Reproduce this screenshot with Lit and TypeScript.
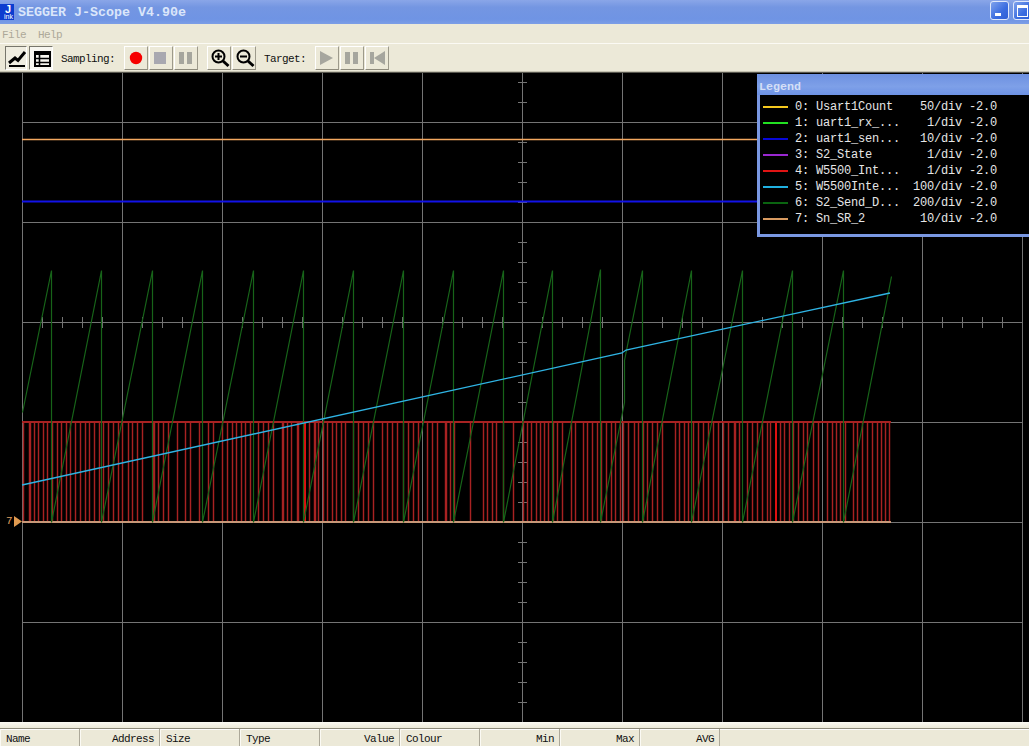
import { LitElement, css, html, svg } from 'lit'
import { customElement } from 'lit/decorators.js'

const LEGEND = [
  { name: 'Usart1Count', value: '50/div -2.0', color: '#f5c81e' },
  { name: 'uart1_rx_...', value: '1/div -2.0', color: '#22e022' },
  { name: 'uart1_sen...', value: '10/div -2.0', color: '#0808d8' },
  { name: 'S2_State', value: '1/div -2.0', color: '#9a28d0' },
  { name: 'W5500_Int...', value: '1/div -2.0', color: '#e01414' },
  { name: 'W5500Inte...', value: '100/div -2.0', color: '#20b0e0' },
  { name: 'S2_Send_D...', value: '200/div -2.0', color: '#0a6410' },
  { name: 'Sn_SR_2', value: '10/div -2.0', color: '#d89a60' },
]

const COLUMNS = [
  { label: 'Name' },
  { label: 'Address', right: true },
  { label: 'Size' },
  { label: 'Type' },
  { label: 'Value', right: true },
  { label: 'Colour' },
  { label: 'Min', right: true },
  { label: 'Max', right: true },
  { label: 'AVG', right: true },
]

// pulse edges of channel 4, read off the trace
const RED_X = [
  23, 29, 30, 34, 38, 43, 47, 52, 57, 61, 66, 70, 75, 80, 85, 89, 94, 99, 103, 108, 113, 118, 122, 128, 132, 137, 142,
  153, 154, 158, 163, 168, 177, 185, 190, 199, 208, 213, 222, 227, 232, 236, 241, 245, 250, 258, 263, 268, 273, 282,
  283, 287, 291, 297, 298, 309, 314, 315, 318, 323, 327, 332, 336, 341, 345, 353, 358, 363, 368, 373, 382, 387, 392,
  397, 403, 408, 413, 418, 427, 432, 437, 445, 446, 450, 454, 470, 483, 487, 492, 496, 503, 513, 523, 527, 531, 536,
  540, 544, 548, 553, 557, 562, 571, 575, 583, 587, 592, 597, 601, 606, 611, 615, 620, 623, 628, 634, 638, 643, 647,
  652, 657, 662, 675, 679, 684, 688, 693, 698, 703, 708, 713, 718, 723, 728, 734, 735, 739, 747, 752, 757, 762, 767,
  770, 780, 784, 789, 793, 798, 803, 807, 813, 818, 827, 832, 836, 840, 845, 853, 857, 862, 867, 872, 877, 881, 885,
  889,
]
const RED_BRIGHT = [304, 305, 775, 776]

const GREEN_PEAKS = [51, 101, 152, 202, 253, 303, 353, 403, 453, 503, 552]
const GREEN_PEAKS_2 = [642, 691, 742, 792, 843]

function range(from: number, to: number, step: number) {
  const out: number[] = []
  for (let v = from; v <= to; v += step) out.push(v)
  return out
}

function greenPoints() {
  const pts: number[][] = [[22, 412]]
  for (const x of GREEN_PEAKS) pts.push([x, 270], [x, 522])
  // channel jumps near x=624
  pts.push([600, 269], [600, 522], [624, 402], [624, 360])
  for (const x of GREEN_PEAKS_2) pts.push([x, 270], [x, 522])
  pts.push([891, 276])
  return pts.map((p) => `${p[0] + 0.5},${p[1] + 0.5}`).join(' ')
}

@customElement('scope-chart')
export class ScopeChart extends LitElement {
  static styles = css`
    :host {
      display: block;
      height: 649px;
      background: #000;
    }
    svg {
      display: block;
    }
    .crisp {
      shape-rendering: crispEdges;
    }
    .grid line {
      stroke: #747474;
    }
    .red line {
      stroke: #a82222;
    }
    .red .bright {
      stroke: #e01010;
    }
    .red-glow line {
      stroke: #a82222;
      stroke-width: 3;
      opacity: 0.22;
    }
    .marker-label {
      font: 11px 'Liberation Mono', monospace;
      fill: #e0a060;
    }
  `

  render() {
    const vl = range(22, 1022, 100)
    const hl = range(122, 622, 100)
    const hTicks = range(42, 1002, 20)
    const vTicks = range(82, 702, 20)
    return html`
      <svg width="1029" height="649" viewBox="0 73 1029 649">
        <g class="grid crisp">
          ${vl.map((x) => svg`<line x1=${x + 0.5} x2=${x + 0.5} y1="73" y2="722"></line>`)}
          ${hl.map((y) => svg`<line x1="22" x2="1023" y1=${y + 0.5} y2=${y + 0.5}></line>`)}
          ${hTicks.map((x) => svg`<line x1=${x + 0.5} x2=${x + 0.5} y1="317" y2="328"></line>`)}
          ${vTicks.map((y) => svg`<line x1="518" x2="527" y1=${y + 0.5} y2=${y + 0.5}></line>`)}
        </g>
        <line x1="22" x2="757" y1="139.5" y2="139.5" stroke="#f4a860" stroke-width="1.5"></line>
        <line x1="22" x2="757" y1="201.5" y2="201.5" stroke="#1212e8" stroke-width="2"></line>
        <g class="red-glow">
          ${RED_X.map((x) => svg`<line x1=${x + 0.5} x2=${x + 0.5} y1="422" y2="522"></line>`)}
        </g>
        <g class="red crisp">
          ${RED_X.map((x) => svg`<line x1=${x + 0.5} x2=${x + 0.5} y1="422" y2="522"></line>`)}
          ${RED_BRIGHT.map((x) => svg`<line class="bright" x1=${x + 0.5} x2=${x + 0.5} y1="422" y2="522"></line>`)}
          <line x1="22" x2="891" y1="422" y2="422" stroke-width="2"></line>
        </g>
        <line class="crisp" x1="22" x2="891" y1="522" y2="522" stroke="#c89878" stroke-width="2"></line>
        <polyline points=${greenPoints()} fill="none" stroke="#176419" stroke-width="1.2"></polyline>
        <polyline points="22,485 622,353 626,350 890,293" fill="none" stroke="#2fb4e4" stroke-width="1.3"></polyline>
        <text class="marker-label" x="6" y="524">7</text>
        <polygon points="14,516 22,521.5 14,527" fill="#e09a50"></polygon>
      </svg>
    `
  }
}

@customElement('app-root')
export class AppRoot extends LitElement {
  static styles = css`
    :host {
      display: block;
      position: relative;
      width: 100%;
      height: 746px;
      overflow: hidden;
      background: #ece9d8;
      font: 11px 'Liberation Mono', monospace;
      letter-spacing: -0.6px;
      color: #111;
    }

    .titlebar {
      display: flex;
      align-items: center;
      height: 24px;
      box-sizing: border-box;
      background: linear-gradient(180deg, #8aa6e8 0%, #7496e2 30%, #6f94e4 80%, #7c9ee6 100%);
    }
    .app-icon {
      flex: none;
      display: flex;
      flex-direction: column;
      align-items: flex-end;
      width: 14px;
      height: 16px;
      margin-right: 4px;
      background: #0c3cd0;
      color: #fff;
      font: bold 11px/9px 'Liberation Sans', sans-serif;
      letter-spacing: 0;
      overflow: hidden;
    }
    .app-icon span {
      margin: 1px 3px 0 0;
    }
    .app-icon small {
      font: 7px/6px 'Liberation Sans', sans-serif;
      margin-right: 1px;
    }
    .title {
      font: bold 13.33px 'Liberation Mono', monospace;
      letter-spacing: 0;
      color: #dbe6fa;
      white-space: nowrap;
    }
    .win-btns {
      display: flex;
      gap: 4px;
      margin-left: auto;
      margin-right: -3px;
      align-self: flex-start;
      margin-top: 1px;
    }
    .win-btn {
      position: relative;
      box-sizing: border-box;
      width: 19px;
      height: 19px;
      border: 1px solid #dfe8fb;
      border-radius: 3px;
      background: linear-gradient(135deg, #7fa2ec, #3a6ce0 60%, #2f5fd6);
    }
    .win-btn.min::after {
      content: '';
      position: absolute;
      left: 4px;
      bottom: 3px;
      width: 6px;
      height: 3px;
      background: #fff;
    }
    .win-btn.max::after {
      content: '';
      position: absolute;
      left: 3px;
      top: 3px;
      width: 9px;
      height: 8px;
      border: 1px solid #fff;
      border-top-width: 3px;
    }

    .menubar {
      display: flex;
      align-items: center;
      gap: 12px;
      height: 17px;
      padding: 2px 0 0 2px;
      border-bottom: 1px solid #fbfaf4;
      color: #aca899;
    }

    .toolbar {
      display: flex;
      align-items: flex-start;
      box-sizing: border-box;
      height: 29px;
      padding: 2px 0 0 5px;
      border-bottom: 1px solid #57564e;
      box-shadow: inset 0 -1px 0 #c5c2b1;
    }
    .toolbar .label {
      line-height: 26px;
      white-space: nowrap;
    }
    .group {
      display: flex;
      gap: 1px;
    }
    .btn {
      box-sizing: border-box;
      width: 24px;
      height: 24px;
      border: 1px solid;
      border-color: #fff #9d9a8b #8e8b7c #fff;
    }
    .btn svg {
      display: block;
      margin: -1px;
    }
    .toggle {
      box-sizing: border-box;
      height: 24px;
      border: 1px solid;
      border-color: #77766c #fff #fff #77766c;
    }
    .toggle svg {
      display: block;
      margin: -1px;
    }
    .toggle.graph {
      width: 22px;
      margin-right: 2px;
      background: #efede0;
    }
    .toggle.table {
      width: 24px;
      margin-right: 8px;
      background: #f7f6f0;
    }
    .gap-sampling {
      margin-left: 9px;
    }
    .gap-zoom {
      margin-left: 9px;
    }
    .gap-target {
      margin-left: 8px;
    }

    .legend {
      position: absolute;
      left: 757px;
      top: 74px;
      right: 0;
      height: 163px;
      box-sizing: border-box;
      border: 3px solid #7a98e2;
      border-top: 0;
      border-right: 0;
      background: #000;
      font-size: 12px;
      letter-spacing: -0.2px;
      color: #e6e6e6;
    }
    .legend-title {
      height: 21px;
      margin-left: -3px;
      padding: 6px 0 0 2px;
      box-sizing: border-box;
      background: linear-gradient(180deg, #6d90e0, #7ea0e8 60%, #6d92e4);
      color: #d4dff6;
      font-size: 11.67px;
      letter-spacing: 0;
      font-weight: bold;
      line-height: 15px;
    }
    .legend-rows {
      display: flex;
      flex-direction: column;
      padding: 4px 0 0 3px;
    }
    .legend-row {
      display: grid;
      grid-template-columns: 25px 21px 1fr auto;
      column-gap: 0;
      align-items: center;
      width: 234px;
      height: 16px;
      white-space: pre;
    }
    .swatch {
      width: 25px;
      height: 2px;
    }
    .legend-row .idx {
      margin-left: 7px;
      width: 21px;
    }
    .legend-row .name {
      margin-left: 7px;
    }

    .splitter {
      height: 6px;
      background: linear-gradient(180deg, #fbfaf3, #ece9d8);
      border-bottom: 1px solid #8d8a7a;
    }
    .header {
      display: flex;
      height: 17px;
      box-shadow: inset 0 1px 0 #fff;
    }
    .cell {
      flex: none;
      box-sizing: border-box;
      width: 80px;
      padding: 2px 5px 0;
      border-left: 1px solid #fbfaf4;
      border-right: 1px solid #aca899;
      line-height: 16px;
    }
    .cell.right {
      text-align: right;
    }
  `

  private _btn(icon: unknown) {
    return html`<div class="btn">
      <svg width="24" height="24" viewBox="0 0 24 24">${icon}</svg>
    </div>`
  }

  private _pause() {
    return svg`<rect x="5" y="6" width="5" height="12" fill="#a6a69e"></rect><rect x="13" y="6" width="5" height="12" fill="#a6a69e"></rect>`
  }

  private _zoom(plus: boolean) {
    return svg`
      <circle cx="11.5" cy="10.5" r="6" fill="none" stroke="#000" stroke-width="2"></circle>
      <path d="M16 15l5.5 5" stroke="#000" stroke-width="3" fill="none"></path>
      <path d=${plus ? 'M8 10.5h7M11.5 7v7' : 'M8 10.5h7'} stroke="#000" stroke-width="2" fill="none"></path>
    `
  }

  render() {
    return html`
      <div class="titlebar">
        <div class="app-icon"><span>J</span><small>ink</small></div>
        <div class="title">SEGGER J-Scope V4.90e</div>
        <div class="win-btns">
          <div class="win-btn min"></div>
          <div class="win-btn max"></div>
        </div>
      </div>

      <div class="menubar"><span>File</span><span>Help</span></div>

      <div class="toolbar">
        <div class="toggle graph">
          <svg width="22" height="24" viewBox="0 0 22 24">
            <path d="M4 17l6-5 3 2.5 7-8.5" fill="none" stroke="#000" stroke-width="3"></path>
            <rect x="4" y="19" width="16" height="2" fill="#000"></rect>
          </svg>
        </div>
        <div class="toggle table">
          <svg width="24" height="24" viewBox="0 0 24 24">
            <path d="M6 6h15v14h-15z" fill="none" stroke="#000" stroke-width="2"></path>
            <rect x="6" y="6" width="15" height="3" fill="#000"></rect>
            <path d="M6 12.5h15M6 16.5h15M10.5 6v14" stroke="#000" stroke-width="1.6" fill="none"></path>
          </svg>
        </div>
        <span class="label">Sampling:</span>
        <div class="group gap-sampling">
          ${this._btn(svg`<circle cx="12" cy="12" r="6.2" fill="#f60000"></circle>`)}
          ${this._btn(svg`<rect x="5" y="6" width="12" height="12" fill="#a8a8b0"></rect>`)}
          ${this._btn(this._pause())}
        </div>
        <div class="group gap-zoom">${this._btn(this._zoom(true))} ${this._btn(this._zoom(false))}</div>
        <span class="label gap-target">Target:</span>
        <div class="group gap-sampling">
          ${this._btn(svg`<path d="M5 5l13 7-13 7z" fill="#a6a69e"></path>`)}
          ${this._btn(this._pause())}
          ${this._btn(svg`<rect x="5" y="6" width="4" height="12" fill="#a6a69e"></rect><path d="M20 5v14l-11-7z" fill="#a6a69e"></path>`)}
        </div>
      </div>

      <scope-chart></scope-chart>

      <div class="legend">
        <div class="legend-title">Legend</div>
        <div class="legend-rows">
          ${LEGEND.map(
            (row, i) => html`
              <div class="legend-row">
                <div class="swatch" style="background:${row.color}"></div>
                <span class="idx">${i}:</span>
                <span class="name">${row.name}</span>
                <span>${row.value}</span>
              </div>
            `,
          )}
        </div>
      </div>

      <div class="splitter"></div>
      <div class="header">
        ${COLUMNS.map((c) => html`<div class="cell ${c.right ? 'right' : ''}">${c.label}</div>`)}
      </div>
    `
  }
}
